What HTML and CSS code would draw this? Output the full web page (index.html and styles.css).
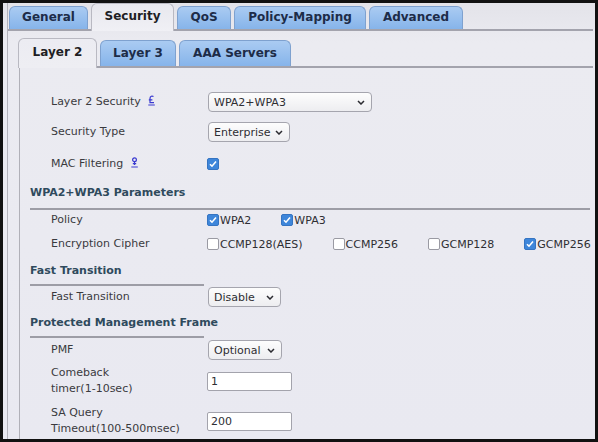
FILE: index.html
```html
<!DOCTYPE html>
<html>
<head>
    <meta charset="UTF-8">
    <title>WLAN Security</title>
    <link rel="stylesheet" href="styles.css">
</head>
<body>
<div class="frame">
    <div class="panel">
        <div class="tabbar">
            <span class="tab t-gen">General</span>
            <span class="tab active t-sec">Security</span>
            <span class="tab t-qos">QoS</span>
            <span class="tab t-pol">Policy-Mapping</span>
            <span class="tab t-adv">Advanced</span>
        </div>

        <div class="subpanel">
            <div class="tabbar sub">
                <span class="tab active t-l2">Layer 2</span>
                <span class="tab t-l3">Layer 3</span>
                <span class="tab t-aaa">AAA Servers</span>
            </div>

            <div class="form">
                <div class="row r-top">
                    <span class="label">Layer 2 Security
                        <svg class="hint" width="7" height="11" viewBox="0 0 7 11"><path d="M5.5 1.6C4.2 0.6 2 1 2 3.6V7.6H6M0.8 4.8H4.4M0.3 10H6.8"/></svg>
                    </span>
                    <div class="select w-wide">WPA2+WPA3 <svg width="8" height="5" viewBox="0 0 8 5"><path d="M1 1l3 3 3-3"/></svg></div>
                </div>
                <div class="row r-32">
                    <span class="label">Security Type</span>
                    <div class="select w-ent">Enterprise <svg width="8" height="5" viewBox="0 0 8 5"><path d="M1 1l3 3 3-3"/></svg></div>
                </div>
                <div class="row r-32">
                    <span class="label">MAC Filtering
                        <svg class="hint" width="7" height="11" viewBox="0 0 7 11"><circle cx="3.5" cy="2.8" r="1.9"/><path d="M3.5 4.7V8M1.8 6.6H5.2M0.3 10H6.8"/></svg>
                    </span>
                    <span class="cb on"><svg width="10" height="10" viewBox="0 0 10 10"><path d="M2 5.2l2 2 4-4.6"/></svg></span>
                </div>

                <div class="heading h-wpa">WPA2+WPA3 Parameters</div>
                <div class="row r-policy">
                    <span class="label">Policy</span>
                    <div class="opts">
                        <span class="opt"><span class="cb on"><svg width="10" height="10" viewBox="0 0 10 10"><path d="M2 5.2l2 2 4-4.6"/></svg></span>WPA2</span>
                        <span class="opt"><span class="cb on"><svg width="10" height="10" viewBox="0 0 10 10"><path d="M2 5.2l2 2 4-4.6"/></svg></span>WPA3</span>
                    </div>
                </div>
                <div class="row r-cipher">
                    <span class="label">Encryption Cipher</span>
                    <div class="opts">
                        <span class="opt"><span class="cb"></span>CCMP128(AES)</span>
                        <span class="opt"><span class="cb"></span>CCMP256</span>
                        <span class="opt"><span class="cb"></span>GCMP128</span>
                        <span class="opt"><span class="cb on"><svg width="10" height="10" viewBox="0 0 10 10"><path d="M2 5.2l2 2 4-4.6"/></svg></span>GCMP256</span>
                    </div>
                </div>

                <div class="heading short h-ft">Fast Transition</div>
                <div class="row r-22">
                    <span class="label">Fast Transition</span>
                    <div class="select w-dis">Disable <svg width="8" height="5" viewBox="0 0 8 5"><path d="M1 1l3 3 3-3"/></svg></div>
                </div>

                <div class="heading short h-pmf">Protected Management Frame</div>
                <div class="row r-24">
                    <span class="label">PMF</span>
                    <div class="select w-opt">Optional <svg width="8" height="5" viewBox="0 0 8 5"><path d="M1 1l3 3 3-3"/></svg></div>
                </div>
                <div class="row r-38">
                    <span class="label">Comeback<br>timer(1-10sec)</span>
                    <input class="field" type="text" value="1">
                </div>
                <div class="row r-42">
                    <span class="label">SA Query<br>Timeout(100-500msec)</span>
                    <input class="field" type="text" value="200">
                </div>
            </div>
        </div>
    </div>
</div>
</body>
</html>
```

FILE: styles.css
```css
* {
    margin: 0;
    padding: 0;
    box-sizing: border-box;
}

body {
    font-family: "DejaVu Sans", Verdana, sans-serif;
    font-size: 11px;
    color: #3a3a3e;
    background: #111;
}

.frame {
    width: 598px;
    height: 442px;
    border: 3px solid #111;
    background: linear-gradient(#e3e3e9, #ebebf1 40px, #e9e9f1);
    overflow: hidden;
}

.panel {
    margin: 0 2px 0 4px;
    height: 100%;
    border-left: 1px solid #b3b3bb;
}

/* tabs */
.tabbar {
    display: flex;
    align-items: flex-end;
    gap: 3px;
    height: 28px;
    padding-left: 1px;
    border-bottom: 2px solid #a3a3ad;
}

.tab {
    height: 23px;
    line-height: 21px;
    text-align: center;
    border: 1px solid #7ea1cf;
    border-bottom: none;
    border-radius: 6px 6px 0 0;
    background: linear-gradient(#aacbf2, #86b4ea);
    font-weight: bold;
    font-size: 12px;
    color: #1d2c48;
}

.t-gen { width: 79px; }
.t-sec { width: 83px; }
.t-qos { width: 54px; }
.t-pol { width: 132px; }
.t-adv { width: 94px; }
.t-l2 { width: 79px; }
.t-l3 { width: 76px; }
.t-aaa { width: 112px; }

.tab.active {
    height: 28px;
    line-height: 24px;
    margin-bottom: -2px;
    background: linear-gradient(#e8e8ee, #f0f0f5);
    border-color: #b9b9c2;
    color: #1e1e24;
}

.subpanel {
    margin: 7px 0 0 11px;
}

.tabbar.sub {
    height: 30px;
    padding-left: 0;
    margin-left: -1px;
}

.tabbar.sub .tab {
    height: 26px;
    line-height: 24px;
}

.tabbar.sub .tab.active {
    height: 30px;
    line-height: 26px;
    background: linear-gradient(#ececf2, #eeeef3);
}

/* form */
.form {
    border-left: 1px solid #b0b0b8;
    padding-top: 20px;
    height: 400px;
}

.row {
    display: flex;
    align-items: center;
}

.r-top { height: 28px; }
.r-32 { height: 32px; }
.r-policy { height: 20px; }
.r-cipher { height: 28px; }
.r-22 { height: 22px; }
.r-24 { height: 24px; }
.r-38 { height: 38px; }
.r-42 { height: 42px; }

.label {
    width: 187px;
    padding-left: 31px;
    line-height: 16px;
    flex-shrink: 0;
}

.hint {
    margin-left: 4px;
    vertical-align: -1px;
    fill: none;
    stroke: #3a3ad0;
    stroke-width: 1.2;
}

.heading {
    margin: 0 3px 0 10px;
    line-height: 16px;
    font-weight: bold;
    white-space: nowrap;
    color: #2f4a5d;
    border-bottom: 2px solid #9d9da6;
}

.h-wpa { padding: 5px 0 7px; }
.h-ft { padding: 5px 0 5px; }
.h-pmf { padding: 7px 0 5px; }

.heading.short {
    width: 174px;
}

.select {
    display: flex;
    align-items: center;
    justify-content: space-between;
    height: 20px;
    margin-left: 1px;
    padding: 0 6px 0 5px;
    border: 1px solid #a5a5ae;
    border-radius: 4px;
    background: linear-gradient(#fdfdfd, #ededf0);
    color: #2e2e33;
}

.select svg {
    fill: none;
    stroke: #2b2b30;
    stroke-width: 1.5;
}

.w-wide { width: 164px; }
.w-ent { width: 82px; }
.w-dis { width: 73px; }
.w-opt { width: 74px; }

.cb {
    display: inline-flex;
    align-items: center;
    justify-content: center;
    width: 12px;
    height: 12px;
    border: 1px solid #9a9aa3;
    border-radius: 2px;
    background: #fff;
}

.cb.on {
    background: #3e86da;
    border-color: #3574c2;
}

.cb svg {
    fill: none;
    stroke: #fff;
    stroke-width: 1.6;
}

.opts {
    display: flex;
    gap: 30px;
}

.opt {
    display: flex;
    align-items: center;
    gap: 1px;
    color: #2e2e33;
}

.field {
    width: 85px;
    height: 19px;
    padding-left: 3px;
    border: 1px solid #a3a3ac;
    border-radius: 2px;
    background: #fff;
    font-family: "DejaVu Sans", Verdana, sans-serif;
    font-size: 11px;
    color: #2e2e33;
    outline: none;
}
```
